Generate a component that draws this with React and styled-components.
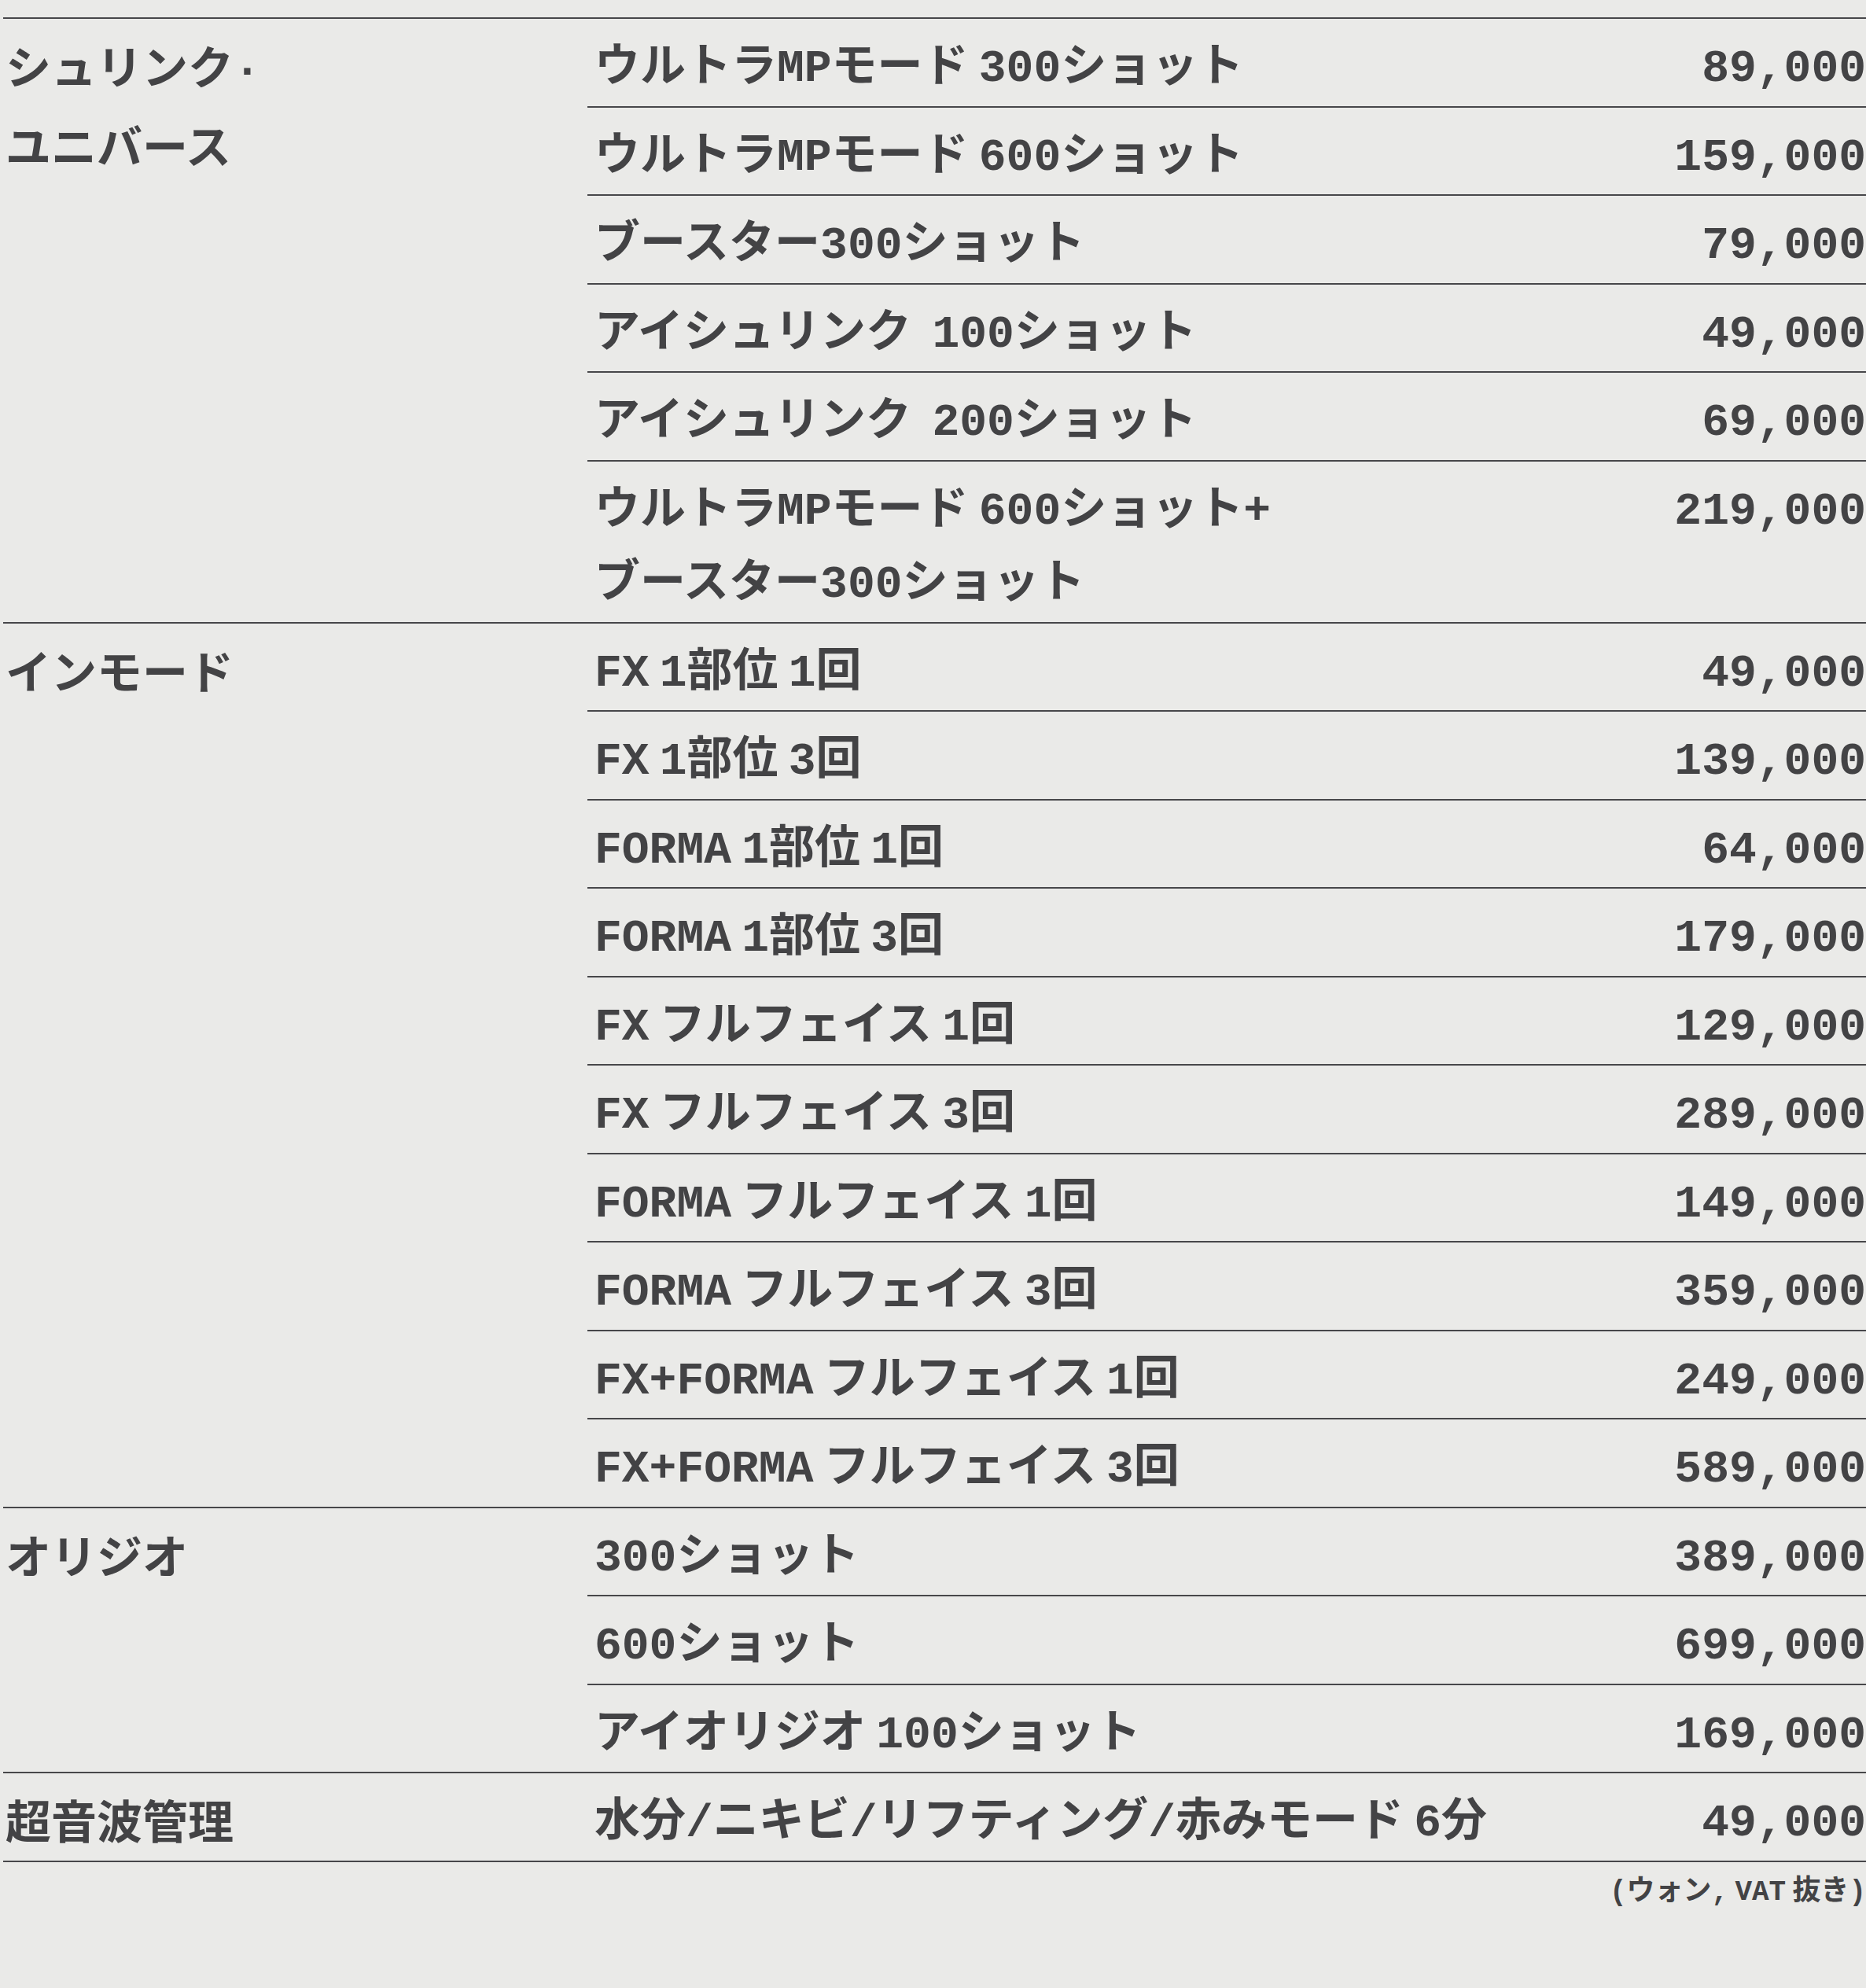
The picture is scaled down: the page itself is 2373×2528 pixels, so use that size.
import React from 'react';
import styled, { createGlobalStyle } from 'styled-components';

const GlobalStyle = createGlobalStyle`
  html, body {
    margin: 0;
    padding: 0;
    background: #eaeae8;
  }
  body {
    font-family: "Liberation Mono", "Noto Sans CJK JP", monospace;
    font-weight: 700;
    color: #434345;
  }
`;

const Page = styled.div`
  padding: 22px 0 60px 4px;
`;

const Table = styled.div`
  border-bottom: 2px solid #47474a;
`;

const Group = styled.section`
  display: grid;
  grid-template-columns: 743px 1fr;
  border-top: 2px solid #47474a;
`;

// the label never sets the group height, the item rows do
const Category = styled.div`
  contain: size;
  padding: 17px 0 0 3px;
  font-size: 58px;
  line-height: 101px;
`;

const Items = styled.div`
  display: flex;
  flex-direction: column;
`;

const Row = styled.div`
  display: flex;
  justify-content: space-between;
  align-items: flex-start;
  padding: 17px 0 0 9px;
  border-top: ${(p) => (p.$first ? 'none' : '2px solid #47474a')};
  font-size: 58px;
  line-height: 93.5px;
`;

const Name = styled.div`
  flex: 1;
`;

const Price = styled.div`
  white-space: nowrap;
  text-align: right;
`;

const Note = styled.p`
  margin: 14px 0 0;
  text-align: right;
  font-size: 36px;
  line-height: 50px;
`;

// narrow proportional space, the mono one is too wide
const Sp = styled.span`
  font-family: "Noto Sans CJK JP", sans-serif;
  white-space: pre;
  line-height: 0;
`;

const groups = [
  {
    name: ['シュリンク·', 'ユニバース'],
    items: [
      { name: ['ウルトラMPモード 300ショット'], price: '89,000' },
      { name: ['ウルトラMPモード 600ショット'], price: '159,000' },
      { name: ['ブースター300ショット'], price: '79,000' },
      { name: ['アイシュリンク  100ショット'], price: '49,000' },
      { name: ['アイシュリンク  200ショット'], price: '69,000' },
      { name: ['ウルトラMPモード 600ショット+', 'ブースター300ショット'], price: '219,000' },
    ],
  },
  {
    name: ['インモード'],
    items: [
      { name: ['FX 1部位 1回'], price: '49,000' },
      { name: ['FX 1部位 3回'], price: '139,000' },
      { name: ['FORMA 1部位 1回'], price: '64,000' },
      { name: ['FORMA 1部位 3回'], price: '179,000' },
      { name: ['FX フルフェイス 1回'], price: '129,000' },
      { name: ['FX フルフェイス 3回'], price: '289,000' },
      { name: ['FORMA フルフェイス 1回'], price: '149,000' },
      { name: ['FORMA フルフェイス 3回'], price: '359,000' },
      { name: ['FX+FORMA フルフェイス 1回'], price: '249,000' },
      { name: ['FX+FORMA フルフェイス 3回'], price: '589,000' },
    ],
  },
  {
    name: ['オリジオ'],
    items: [
      { name: ['300ショット'], price: '389,000' },
      { name: ['600ショット'], price: '699,000' },
      { name: ['アイオリジオ 100ショット'], price: '169,000' },
    ],
  },
  {
    name: ['超音波管理'],
    items: [
      { name: ['水分/ニキビ/リフティング/赤みモード 6分'], price: '49,000' },
    ],
  },
];

const Text = ({ value }) =>
  value.split(' ').map((part, i) => (
    <React.Fragment key={i}>
      {i > 0 && <Sp> </Sp>}
      {part}
    </React.Fragment>
  ));

const Lines = ({ lines }) =>
  lines.map((line, i) => (
    <React.Fragment key={i}>
      {i > 0 && <br />}
      <Text value={line} />
    </React.Fragment>
  ));

const App = () => {
  return (
    <Page>
      <GlobalStyle />
      <Table>
        {groups.map((group, g) => (
          <Group key={g}>
            <Category>
              <Lines lines={group.name} />
            </Category>
            <Items>
              {group.items.map((item, i) => (
                <Row key={i} $first={i === 0}>
                  <Name>
                    <Lines lines={item.name} />
                  </Name>
                  <Price>{item.price}</Price>
                </Row>
              ))}
            </Items>
          </Group>
        ))}
      </Table>
      <Note>
        <Text value="(ウォン, VAT 抜き)" />
      </Note>
    </Page>
  );
};

export default App;
